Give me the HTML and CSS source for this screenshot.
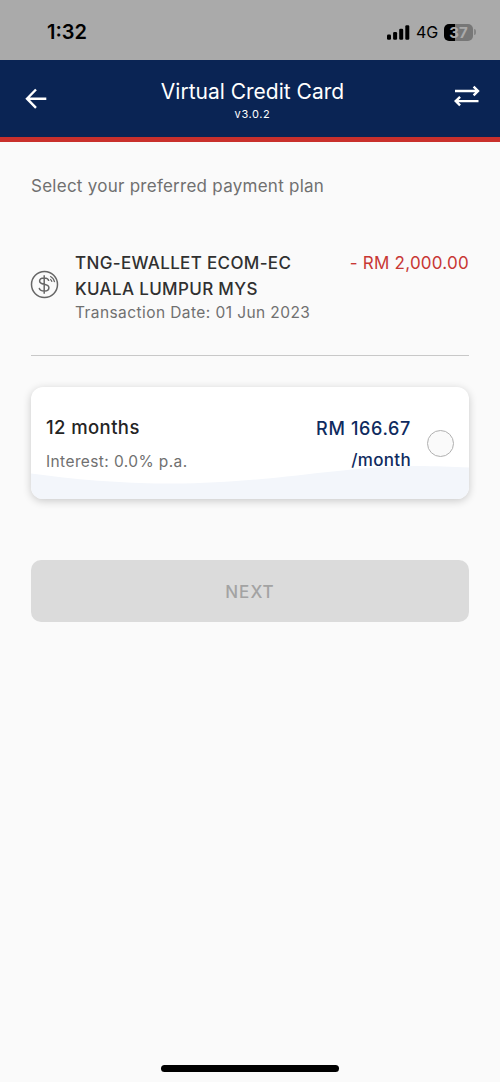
FILE: index.html
```html
<!DOCTYPE html>
<html lang="en">
<head>
<meta charset="utf-8">
<title>Virtual Credit Card</title>
<link rel="stylesheet" href="styles.css">
</head>
<body>
<div class="screen">
  <div class="status">
    <span class="time">1:32</span>
    <div class="indicators">
      <svg class="signal" width="23" height="15" viewBox="0 0 23 15"><rect x="0" y="9.5" width="4" height="5.3" rx="1.2"/><rect x="6.1" y="7" width="4" height="7.8" rx="1.2"/><rect x="12.2" y="3.7" width="4" height="11.1" rx="1.2"/><rect x="18.3" y="0.3" width="4" height="14.5" rx="1.2"/></svg>
      <span class="network">4G</span>
      <div class="battery"><span class="level">37</span><i class="cap"></i></div>
    </div>
  </div>
  <header class="header">
    <svg class="back" width="22" height="22" viewBox="0 0 22 22"><path d="M21.3 10.7H2M11 1.5L2 10.7L11 19.9"/></svg>
    <div class="heading">
      <h1 class="title">Virtual Credit Card</h1>
      <span class="version">v3.0.2</span>
    </div>
    <svg class="swap" width="26" height="22" viewBox="0 0 26 22"><path d="M1 6H24M19.6 1.7L24 6L19.6 10.3M24.5 16.1H1.7M6.1 11.8L1.7 16.1L6.1 20.4"/></svg>
  </header>
  <main class="content">
    <p class="prompt">Select your preferred payment plan</p>
    <section class="transaction">
      <svg class="coin" width="29" height="29" viewBox="0 0 29 29"><circle cx="14.5" cy="14.5" r="13"/><path d="M14.2 5.3V23.7M18.7 11C18.4 8.9 16.7 8 14.2 8C11.5 8 9.6 9.1 9.6 11.1C9.6 13.3 11.6 13.9 14.2 14.3C16.9 14.8 18.9 15.4 18.9 17.8C18.9 20 17.1 21.1 14.4 21.1C11.6 21.1 9.6 20.2 9.2 17.9"/><path class="shine" d="M20.2 6.2Q23.8 8 24.6 12.2M20.2 9.2Q21.6 10 22 11.8"/></svg>
      <div class="details">
        <p class="merchant">TNG-EWALLET ECOM-EC<br>KUALA LUMPUR MYS</p>
        <p class="date">Transaction Date: 01 Jun 2023</p>
      </div>
      <p class="amount">- RM 2,000.00</p>
    </section>
    <section class="plan">
      <svg class="wave" width="438" height="34" viewBox="0 0 438 34"><path d="M0 8.5C55 16 100 18.5 140 18.5C240 18.5 310 1 385 1C405 1 420 2 438 2.5V34H0Z"/></svg>
      <div class="term">
        <p class="months">12 months</p>
        <p class="interest">Interest: 0.0% p.a.</p>
      </div>
      <div class="price">
        <p class="monthly">RM 166.67</p>
        <p class="unit">/month</p>
      </div>
      <span class="radio"></span>
    </section>
    <button class="next" disabled>NEXT</button>
  </main>
  <div class="home"></div>
</div>
</body>
</html>
```
FILE: styles.css
```css
* { box-sizing: border-box; }
body { margin: 0; font-family: Inter, "Liberation Sans", sans-serif; background: #fafafa; }
p, h1 { margin: 0; font-weight: 400; white-space: nowrap; }
.screen { width: 500px; height: 1082px; display: flex; flex-direction: column; }
.status { height: 60px; background: #aaa; display: flex; justify-content: space-between; align-items: center; padding: 4px 24px 0 47px; }
.time { font-size: 20px; font-weight: 600; line-height: 24px; }
.indicators { display: flex; align-items: center; }
.signal { margin-right: 6px; }
.network { font-size: 16px; font-weight: 400; line-height: 20px; width: 28px; }
.battery { display: flex; align-items: center; }
.level { width: 29px; height: 17px; border-radius: 5px; background: linear-gradient(to right, #000 11px, #777 11px); color: #aaa; font-size: 15px; font-weight: 700; line-height: 17px; text-align: center; }
.cap { width: 2px; height: 6px; margin-left: 1px; border-radius: 0 2px 2px 0; background: #858585; }
.header { height: 82px; background: #0a2454; border-bottom: 5px solid #c9302c; color: #fff; display: flex; justify-content: space-between; padding: 0 20px 0 25px; }
.back, .swap { fill: none; stroke: #fff; stroke-width: 2.4; }
.back { margin-top: 28px; }
.swap { margin-top: 25px; }
.heading { text-align: center; padding: 19px 0 0 4px; }
.title { font-size: 21px; line-height: 26px; letter-spacing: 0; }
.version { display: block; font-size: 11px; line-height: 14px; margin-top: 2px; letter-spacing: .6px; }
.content { flex: 1; padding: 33px 31px 0; }
.prompt { font-size: 17px; line-height: 22px; color: #707070; letter-spacing: .26px; }
.transaction { display: flex; align-items: flex-start; height: 159px; padding-top: 54px; border-bottom: 1px solid #c8c8c8; }
.coin { fill: none; stroke: #666; stroke-width: 1.5; margin: 19px 16px 0 -1px; }
.shine { stroke-width: 1.2; }
.details { flex: 1; }
.merchant { font-size: 17px; line-height: 25.5px; color: #303030; font-weight: 500; letter-spacing: .34px; }
.date { font-size: 15.5px; line-height: 22px; color: #707070; letter-spacing: .42px; }
.amount { font-size: 17px; line-height: 25px; color: #c83734; letter-spacing: .24px; }
.plan { position: relative; display: flex; height: 112px; margin-top: 31px; padding: 0 15px; border-radius: 12px; background: #fff; box-shadow: 0 2px 8px rgba(0,0,0,.2); overflow: hidden; }
.wave { position: absolute; left: 0; bottom: 0; fill: #f3f6fb; }
.term, .price { position: relative; }
.term { flex: 1; padding-top: 28px; }
.months { font-size: 18.5px; line-height: 24px; font-weight: 500; color: #242424; letter-spacing: .4px; }
.interest { font-size: 15.5px; line-height: 20px; margin-top: 13px; color: #707070; letter-spacing: .4px; }
.price { padding-top: 30px; text-align: right; color: #0f2b60; }
.monthly { font-size: 18px; line-height: 24px; font-weight: 500; letter-spacing: .65px; }
.unit { font-size: 17px; line-height: 24px; font-weight: 500; margin-top: 7px; letter-spacing: .3px; }
.radio { position: relative; width: 27px; height: 27px; margin: 42.5px 0 0 16px; border: 1px solid #b0b0b0; border-radius: 50%; background: #fafafa; }
.next { display: block; width: 438px; height: 62px; margin-top: 61px; padding: 1px 0 0; border: 0; border-radius: 10px; background: #dbdbdb; color: #a3a3a3; font-family: inherit; font-size: 17px; font-weight: 500; letter-spacing: 1px; }
.home { width: 178px; height: 7px; margin: 0 auto 10px; border-radius: 4px; background: #000; }
```
